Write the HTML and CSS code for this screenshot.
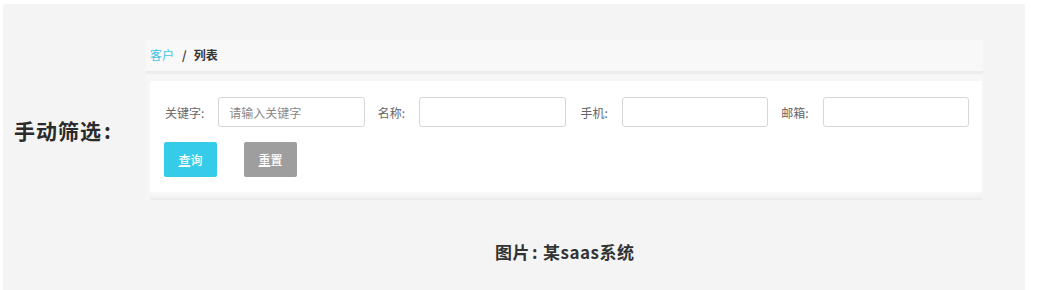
FILE: index.html
```html
<!DOCTYPE html>
<html lang="zh">
<head>
<meta charset="utf-8">
<link rel="stylesheet" href="styles.css">
</head>
<body>
<div class="frame">
  <div class="row">
    <div class="side-label">手动筛选<span class="colon">:</span></div>
    <div class="shot">
      <div class="crumbs"><span class="crumb-link">客户</span><span class="crumb-sep">/</span><span class="crumb-cur">列表</span></div>
      <div class="crumb-line"></div>
      <div class="panel">
        <div class="fields">
          <label class="lbl">关键字:</label>
          <div class="inp"><span class="ph">请输入关键字</span></div>
          <label class="lbl">名称:</label>
          <div class="inp inp-wide"></div>
          <label class="lbl">手机:</label>
          <div class="inp"></div>
          <label class="lbl">邮箱:</label>
          <div class="inp"></div>
        </div>
        <div class="btns">
          <button class="btn btn-primary"><span class="key">查</span>询</button>
          <button class="btn btn-gray"><span class="key">重</span>置</button>
        </div>
      </div>
      <div class="panel-shadow"></div>
    </div>
  </div>
  <div class="caption">图片<span class="cap-colon">:</span>某saas系统</div>
</div>
</body>
</html>
```

FILE: styles.css
```css
* { box-sizing: border-box; }
html, body { margin: 0; padding: 0; background: #ffffff; }
body {
  font-family: "Noto Sans CJK SC", "Noto Sans", sans-serif;
  width: 1039px;
  height: 290px;
  overflow: hidden;
}
.frame {
  margin: 4px 0 0 3px;
  width: 1022px;
  height: 286px;
  background: #f4f4f4;
  padding-top: 36px;
}
.row {
  display: flex;
  align-items: flex-start;
}
.side-label {
  width: 143px;
  padding-left: 11px;
  margin-top: 77px;
  font-size: 21px;
  font-weight: 700;
  color: #2b2b2b;
  line-height: 26px;
  letter-spacing: 1px;
}
.colon { margin-left: 2px; }
.shot {
  width: 837px;
  background: #f6f6f6;
}
.crumbs {
  height: 31px;
  background: #f8f8f8;
  display: flex;
  align-items: center;
  padding-left: 4px;
  padding-bottom: 2px;
  font-size: 12px;
}
.crumb-link { color: #3ec5e6; }
.crumb-sep { color: #444; margin: 0 7px 0 8px; font-weight: 700; }
.crumb-cur { color: #333; font-weight: 700; }
.crumb-line {
  height: 3px;
  background: #ececec;
}
.panel {
  margin: 7px 1px 0 4px;
  height: 111px;
  background: #ffffff;
  padding: 16px 0 0 15px;
}
.fields {
  display: flex;
  align-items: center;
  height: 30px;
}
.lbl {
  font-size: 12px;
  color: #666;
  margin-right: 14px;
  white-space: nowrap;
}
.inp {
  width: 147px;
  height: 30px;
  border: 1px solid #d6d6d6;
  border-radius: 3px;
  background: #fff;
  margin-right: 13px;
  display: flex;
  align-items: center;
  padding-left: 10px;
}
.inp-wide { margin-right: 15px; }
.ph { font-size: 12px; color: #888; }
.btns {
  display: flex;
  margin: 15px 0 0 -1px;
  gap: 27px;
}
.btn {
  width: 53px;
  height: 35px;
  border: none;
  border-radius: 2px;
  color: #fff;
  font-family: inherit;
  font-size: 12px;
  font-weight: 500;
  padding: 0;
}
.key { text-decoration: underline; }
.btn-primary { background: #36cbe8; }
.btn-gray { background: #9e9e9e; }
.panel-shadow {
  height: 8px;
  background: linear-gradient(#f9f9f9, #f1f1f1);
  margin: 0 1px 0 4px;
  border-bottom: 2px solid #ececec;
}
.caption {
  margin-top: 39px;
  padding-left: 492px;
  font-size: 17px;
  font-weight: 700;
  color: #333;
  letter-spacing: 0.5px;
}
.cap-colon { margin: 0 5px 0 2px; }
```
